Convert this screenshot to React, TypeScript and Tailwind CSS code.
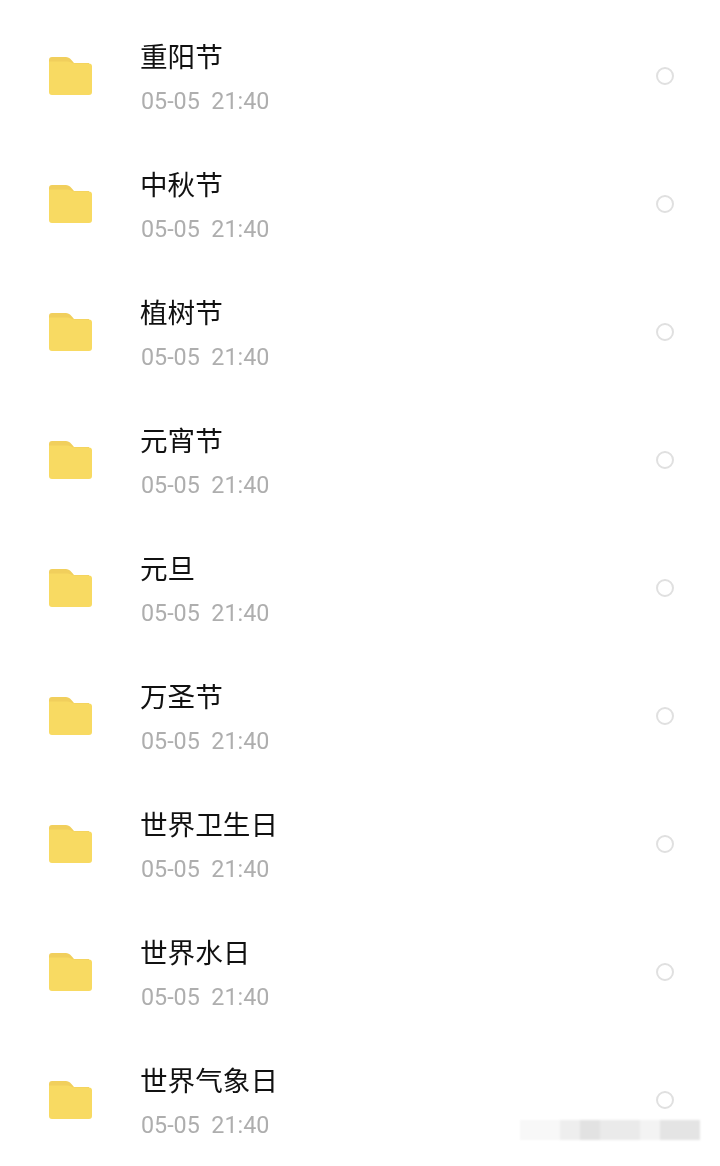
import React from 'react';

const folders = ['重阳节', '中秋节', '植树节', '元宵节', '元旦', '万圣节', '世界卫生日', '世界水日', '世界气象日'];

function FolderIcon() {
  return (
    <svg viewBox="0 0 43 38" className="w-[43px] h-[38px] shrink-0">
      {/* back tab */}
      <path d="M 3 0 H 17 C 20 0 22 2 25 6 H 40 V 14 H 0 V 3 C 0 1 1 0 3 0 Z" fill="#f1cf5c" />
      {/* front */}
      <path d="M 0 4.500 H 18 C 21 4.500 23 6.500 26 6.500 H 40 C 42 6.500 43 7.500 43 9.500 V 35 C 43 37 42 38 40 38 H 3 C 1 38 0 37 0 35 Z" fill="#f8da62" />
    </svg>
  );
}

function FolderRow({ name }: { name: string }) {
  return (
    <div className="h-[128px] flex items-center pl-[49px] pr-[46px]">
      <FolderIcon />
      <div className="ml-[49px] flex-1 flex flex-col mt-[3px]">
        <span className="-ml-[1px] text-[27.6px] leading-[36px] text-[#111111] font-['Noto_Sans_CJK_SC',sans-serif]">{name}</span>
        <span className="mt-[10px] text-[23.3px] leading-[36px] text-[#aeaeae] font-['Roboto',sans-serif] whitespace-pre">05-05  21:40</span>
      </div>
      <div className="w-[18px] h-[18px] rounded-full border-2 border-[#e0e0e0]" />
    </div>
  );
}

export default function App() {
  return (
    <div className="relative w-[720px] h-[1166px] overflow-hidden bg-white pt-[12px]">
      <div className="blur-[0.4px]">
        {folders.map((name) => (
          <FolderRow key={name} name={name} />
        ))}
      </div>
      {/* blurred watermark */}
      <div className="absolute left-[520px] top-[1120px] w-[180px] h-[20px] flex blur-[0.8px]">
        <div className="w-[40px] bg-[#f8f8f8]" />
        <div className="w-[20px] bg-[#eeeeee]" />
        <div className="w-[20px] bg-[#e2e2e2]" />
        <div className="w-[40px] bg-[#eaeaea]" />
        <div className="w-[20px] bg-[#f3f3f3]" />
        <div className="w-[40px] bg-[#e4e4e4]" />
      </div>
    </div>
  );
}
